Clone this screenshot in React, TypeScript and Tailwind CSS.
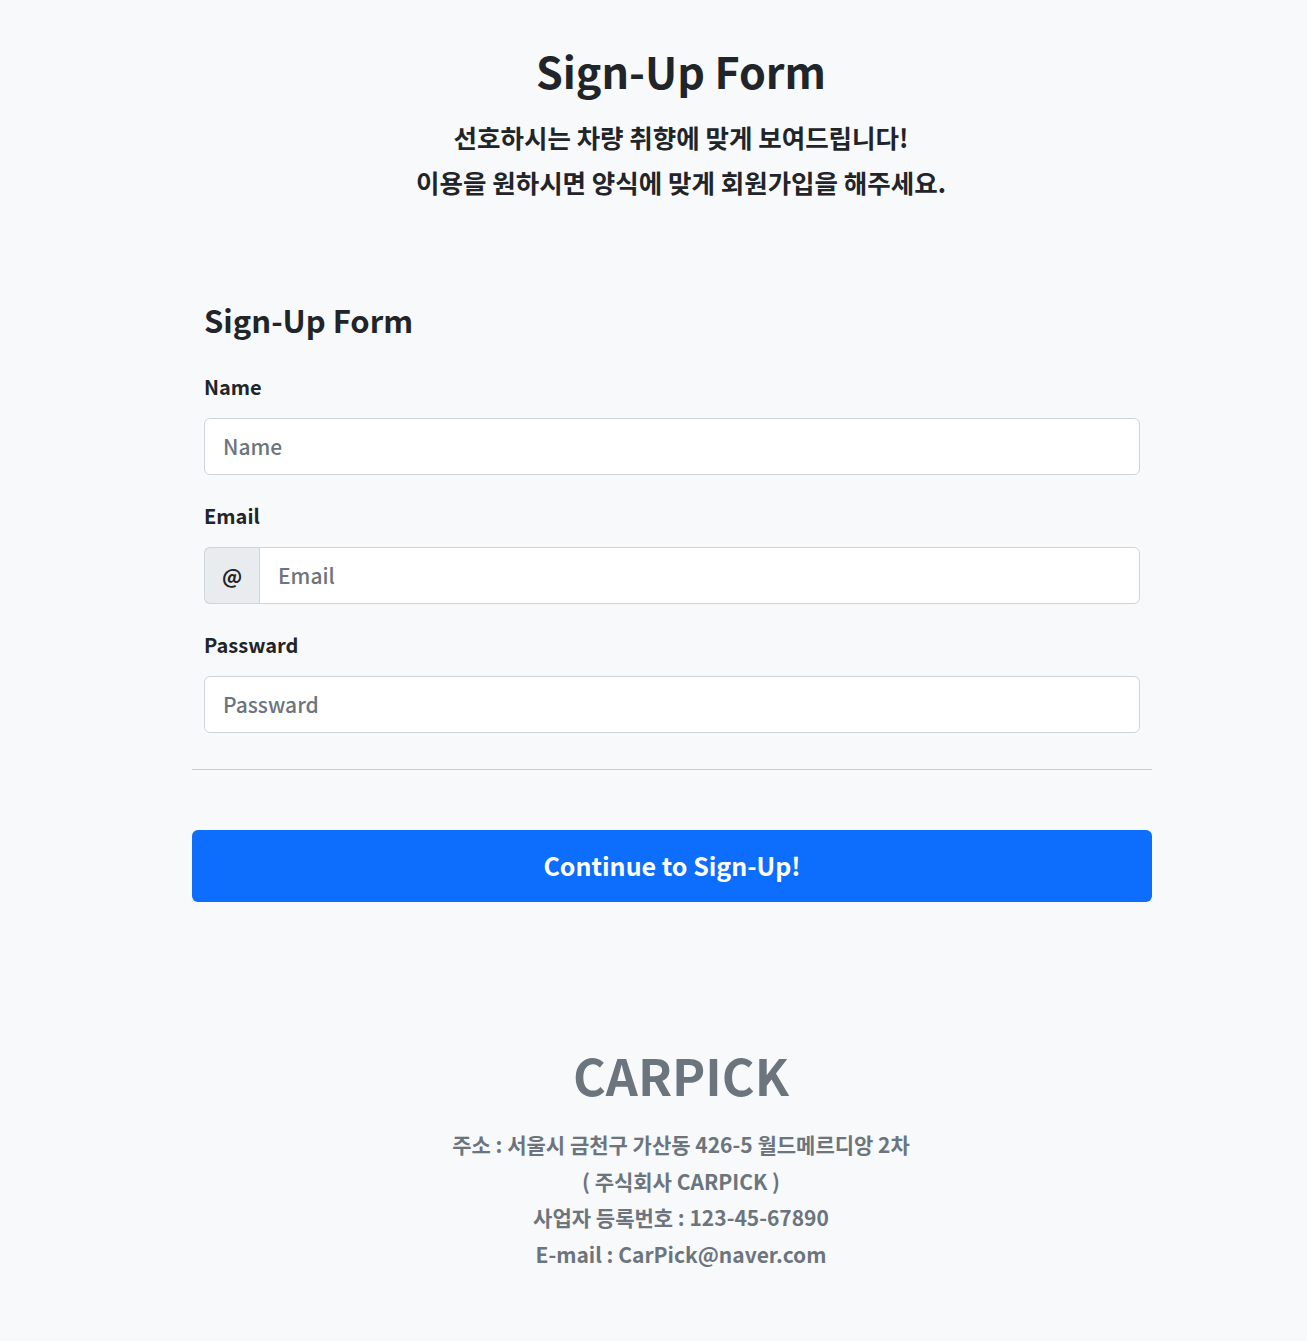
import { useState } from "react";

const font = "font-['Noto_Sans_CJK_KR','Noto_Sans',sans-serif]";

function Field({
  label,
  placeholder,
  value,
  onChange,
  type = "text",
  prefix,
}: {
  label: string;
  placeholder: string;
  value: string;
  onChange: (v: string) => void;
  type?: string;
  prefix?: string;
}) {
  return (
    <div className="mb-[29px]">
      <label className="block text-[20px] leading-[24px] font-semibold text-[#212529] mb-[19px]">
        {label}
      </label>
      <div className="flex h-[57px]">
        {prefix && (
          <span className="flex w-[55px] items-center justify-center rounded-l-md border border-r-0 border-[#ced4da] bg-[#e9ecef] text-[20px] font-bold text-[#212529]">
            {prefix}
          </span>
        )}
        <input
          type={type}
          value={value}
          onChange={(e) => onChange(e.target.value)}
          placeholder={placeholder}
          className={`flex-1 border border-[#ced4da] bg-white px-[18px] text-[21px] font-medium text-[#212529] outline-none placeholder:text-[#6c757d] ${
            prefix ? "rounded-r-md" : "rounded-md"
          }`}
        />
      </div>
    </div>
  );
}

export default function App() {
  const [name, setName] = useState("");
  const [email, setEmail] = useState("");
  const [password, setPassword] = useState("");

  return (
    <div className={`min-h-screen bg-[#f8f9fa] ${font}`}>
      {/* 상단 타이틀 */}
      <header className="pl-[55px] pt-[42px] text-center text-[#212529]">
        <h1 className="text-[43px] leading-[56px] font-bold">Sign-Up Form</h1>
        <p className="mt-[16px] text-[25.5px] leading-[45px] font-bold">
          선호하시는 차량 취향에 맞게 보여드립니다!
          <br />
          이용을 원하시면 양식에 맞게 회원가입을 해주세요.
        </p>
      </header>

      <main className="ml-[192px] w-[960px] mt-[96px]">
        <div className="px-3">
          <h2 className="text-[31px] leading-[40px] font-bold text-[#212529] mb-[35px]">
            Sign-Up Form
          </h2>
          <Field label="Name" placeholder="Name" value={name} onChange={setName} />
          <Field
            label="Email"
            placeholder="Email"
            value={email}
            onChange={setEmail}
            prefix="@"
          />
          <Field
            label="Passward"
            placeholder="Passward"
            type="password"
            value={password}
            onChange={setPassword}
          />
        </div>

        <hr className="mt-[36px] border-0 h-px bg-[#c9cbcd]" />

        <button
          type="button"
          className="mt-[60px] h-[72px] w-full rounded-md bg-[#0d6efd] text-[25px] font-bold text-white"
        >
          Continue to Sign-Up!
        </button>
      </main>

      {/* 푸터 */}
      <footer className="pl-[55px] pt-[140px] text-center text-[#6c757d]">
        <h2 className="text-[50px] leading-[64px] font-bold">CARPICK</h2>
        <div className="mt-[20px] text-[21px] leading-[36.5px] font-semibold">
          <p>주소 : 서울시 금천구 가산동 426-5 월드메르디앙 2차</p>
          <p>( 주식회사 CARPICK )</p>
          <p>사업자 등록번호 : 123-45-67890</p>
          <p>E-mail : CarPick@naver.com</p>
        </div>
      </footer>
    </div>
  );
}
